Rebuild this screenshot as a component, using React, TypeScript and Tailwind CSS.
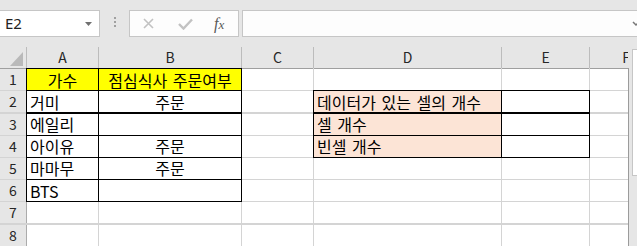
import React from "react";

type Cell = {
  text?: string;
  align?: "left" | "center";
  fill?: "yellow" | "peach";
  boxed?: boolean;
};

const FONT = "font-['Noto_Sans_CJK_KR','Noto_Sans',sans-serif]";
const COLS = "grid grid-cols-[26px_71px_142px_71px_187px_87px_72px]";

const ROWS: Cell[][] = [
  [
    { text: "가수", align: "center", fill: "yellow", boxed: true },
    { text: "점심식사 주문여부", align: "center", fill: "yellow", boxed: true },
    {},
    {},
    {},
    {},
  ],
  [
    { text: "거미", boxed: true },
    { text: "주문", align: "center", boxed: true },
    {},
    { text: "데이터가 있는 셀의 개수", fill: "peach", boxed: true },
    { boxed: true },
    {},
  ],
  [
    { text: "에일리", boxed: true },
    { boxed: true },
    {},
    { text: "셀 개수", fill: "peach", boxed: true },
    { boxed: true },
    {},
  ],
  [
    { text: "아이유", boxed: true },
    { text: "주문", align: "center", boxed: true },
    {},
    { text: "빈셀 개수", fill: "peach", boxed: true },
    { boxed: true },
    {},
  ],
  [
    { text: "마마무", boxed: true },
    { text: "주문", align: "center", boxed: true },
    {},
    {},
    {},
    {},
  ],
  [{ text: "BTS", boxed: true }, { boxed: true }, {}, {}, {}, {}],
  [{}, {}, {}, {}, {}, {}],
  [{}, {}, {}, {}, {}, {}],
];

function FormulaBar() {
  return (
    <div className="flex h-[47px] items-start bg-[#e6e6e6] pt-[10px]">
      {/* Name box */}
      <div className="flex h-[27px] w-[100px] items-center justify-between border border-l-0 border-[#c6c6c6] bg-white pl-[5px] pr-[7px]">
        <span className="font-['Noto_Sans',sans-serif] text-[15px] leading-none text-[#222]">E2</span>
        <svg width="7" height="4" viewBox="0 0 7 4">
          <path d="M0 0h7L3.5 4z" fill="#707070" />
        </svg>
      </div>

      {/* Grip dots */}
      <div className="ml-[14px] mt-[7px] flex w-[2px] flex-col gap-[2px]">
        <span className="h-[2px] w-[2px] bg-[#a0a0a0]" />
        <span className="h-[2px] w-[2px] bg-[#a0a0a0]" />
        <span className="h-[2px] w-[2px] bg-[#a0a0a0]" />
      </div>

      {/* Cancel / enter / fx */}
      <div className="ml-[13px] flex h-[27px] w-[110px] items-center border border-[#c6c6c6] bg-[#fdfdfd]">
        <svg className="ml-[13px]" width="11" height="11" viewBox="0 0 11 11">
          <path d="M1 1l9 9M10 1l-9 9" stroke="#c2c2c2" strokeWidth="1.6" />
        </svg>
        <svg className="ml-[24px]" width="15" height="12" viewBox="0 0 15 12">
          <path d="M1 6l4.5 4.5L14 1.5" stroke="#c2c2c2" strokeWidth="2.4" fill="none" />
        </svg>
        <span className="ml-[21px] font-['Liberation_Serif',serif] text-[16px] italic leading-none text-[#595959]">
          f<span className="text-[13px]">x</span>
        </span>
      </div>

      {/* Formula input */}
      <div className="ml-[3px] flex h-[27px] flex-1 items-center justify-end border border-r-0 border-[#c6c6c6] bg-[#fdfdfd]">
        <svg className="-mr-[3px]" width="8" height="6" viewBox="0 0 8 6">
          <path d="M1 1l3 3 3-3" stroke="#777" strokeWidth="1.5" fill="none" />
        </svg>
      </div>
    </div>
  );
}

function Sheet() {
  return (
    <div className={`${COLS} w-[628px] gap-px overflow-hidden bg-[#d4d4d4] ${FONT}`}>
      {/* corner */}
      <div className="flex h-[21px] items-end justify-end bg-[#e6e6e6] pb-[2px] pr-[3px] shadow-[1px_0_0_0_#bcbcbc,0_1px_0_0_#9f9f9f]">
        <svg width="13" height="14" viewBox="0 0 13 14">
          <path d="M13 0v14H0z" fill="#b9b9b9" />
        </svg>
      </div>
      {["A", "B", "C", "D", "E", "F"].map((c) => (
        <div
          key={c}
          className="flex h-[21px] items-center justify-center bg-[#e6e6e6] text-[14px] text-[#262626] shadow-[1px_0_0_0_#bcbcbc,0_1px_0_0_#9f9f9f]"
        >
          {c}
        </div>
      ))}

      {ROWS.map((row, r) => (
        <React.Fragment key={r}>
          <div className="flex h-[21px] items-center justify-center bg-[#e6e6e6] text-[14px] text-[#262626] shadow-[1px_0_0_0_#ababab]">
            {r + 1}
          </div>
          {row.map((cell, c) => (
            <div
              key={c}
              className={[
                "flex h-[21px] items-center whitespace-nowrap px-[3px] text-[16px] text-black [word-spacing:2px]",
                cell.align === "center" ? "justify-center" : "justify-start",
                cell.fill === "yellow" ? "bg-[#ffff00]" : cell.fill === "peach" ? "bg-[#fce4d6]" : "bg-white",
                cell.boxed ? "shadow-[0_0_0_1px_#000]" : "",
              ].join(" ")}
            >
              {cell.text}
            </div>
          ))}
        </React.Fragment>
      ))}

      {/* sliver of row 9 */}
      <div className="h-[21px] bg-[#e6e6e6] shadow-[1px_0_0_0_#ababab]" />
      {[0, 1, 2, 3, 4, 5].map((c) => (
        <div key={c} className="h-[21px] bg-white" />
      ))}
    </div>
  );
}

export default function App() {
  return (
    <div className="h-[246px] w-[637px] overflow-hidden bg-[#e6e6e6]">
      <FormulaBar />
      <div className="flex">
        <Sheet />
        {/* right edge + vertical scrollbar */}
        <div className="flex flex-1">
          <div className="mt-[21px] h-[200px] w-px bg-[#9b9b9b]" />
          <div className="ml-[3px] mt-[2px] h-[127px] flex-1 border border-r-0 border-[#c6c6c6] bg-white" />
        </div>
      </div>
    </div>
  );
}
